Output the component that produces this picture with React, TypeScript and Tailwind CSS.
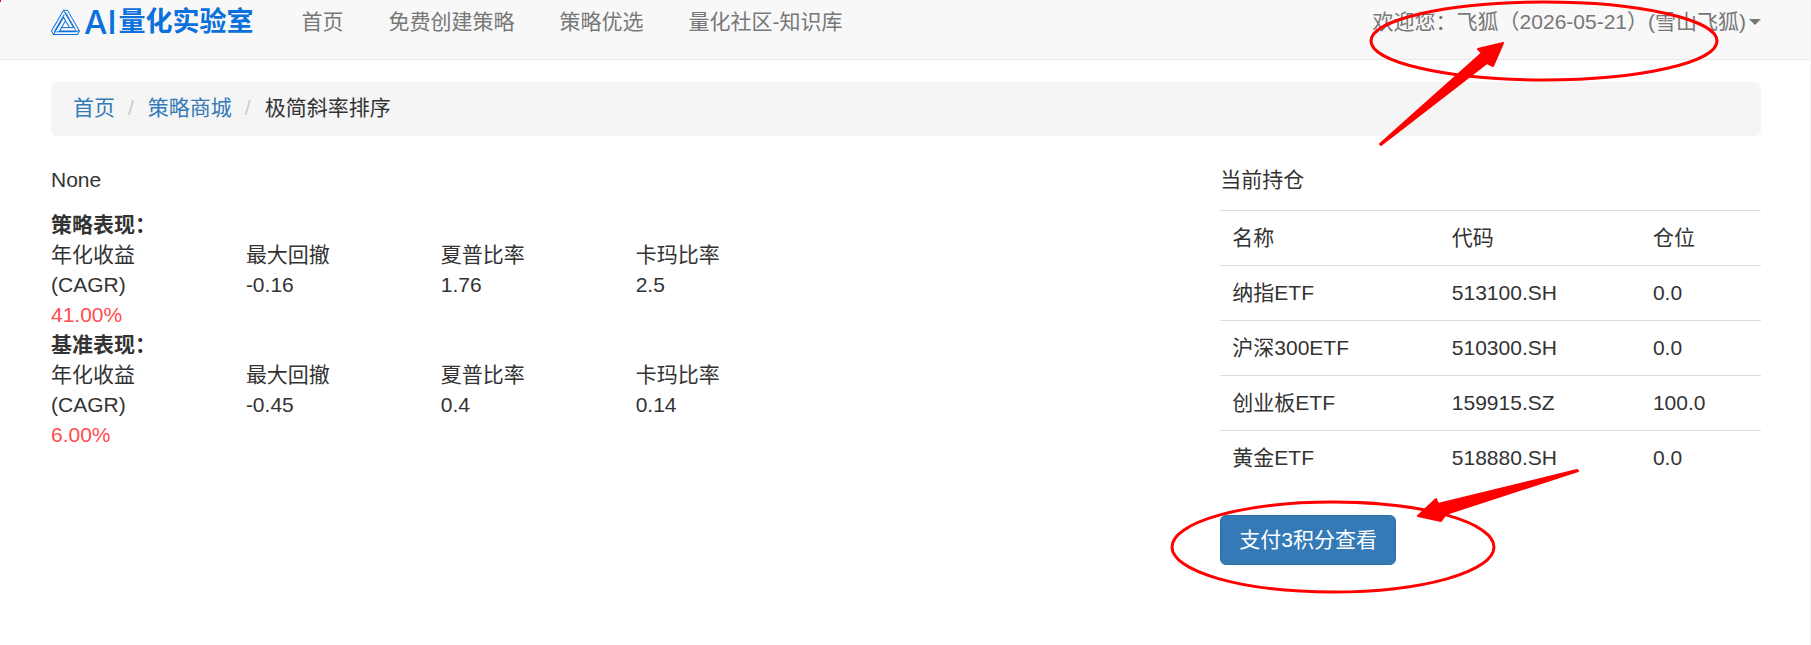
import { Fragment } from 'react'

interface Metric {
  label: string
  value: string
  highlight?: boolean
}

interface Holding {
  name: string
  code: string
  position: string
}

const NAV_ITEMS = ['首页', '免费创建策略', '策略优选', '量化社区-知识库']

const STRATEGY: Metric[] = [
  { label: '年化收益 (CAGR)', value: '41.00%', highlight: true },
  { label: '最大回撤', value: '-0.16' },
  { label: '夏普比率', value: '1.76' },
  { label: '卡玛比率', value: '2.5' }
]

const BENCHMARK: Metric[] = [
  { label: '年化收益 (CAGR)', value: '6.00%', highlight: true },
  { label: '最大回撤', value: '-0.45' },
  { label: '夏普比率', value: '0.4' },
  { label: '卡玛比率', value: '0.14' }
]

const HOLDINGS: Holding[] = [
  { name: '纳指ETF', code: '513100.SH', position: '0.0' },
  { name: '沪深300ETF', code: '510300.SH', position: '0.0' },
  { name: '创业板ETF', code: '159915.SZ', position: '100.0' },
  { name: '黄金ETF', code: '518880.SH', position: '0.0' }
]

function Logo() {
  // One arm of the triangle, drawn three times around its centre
  const arm = 'M12.5 1.3h4l12 20.8M12.5 1.3l10 17.3h-12M14.5 3.4l10 17.3'
  return (
    <a href="#" className="flex items-center text-[#0a70dc]" aria-label="AI量化实验室">
      <svg width="29" height="27" viewBox="0 0 29 27" fill="none" stroke="currentColor" strokeLinejoin="round">
        <path d={arm} />
        <path d={arm} transform="rotate(120 14.5 16.3)" />
        <path d={arm} transform="rotate(240 14.5 16.3)" />
      </svg>
      <span className="ml-1 font-['Inter',sans-serif] text-[33px] leading-[30px] font-medium">AI</span>
      <span className="ml-[2px] text-[27px] leading-[30px] font-bold">量化实验室</span>
    </a>
  )
}

function Navbar() {
  return (
    <nav className="flex items-start justify-between border-b border-[#e7e7e7] bg-[#f8f8f8] pt-[7px] pr-[49px] pb-[22px] pl-[51px] text-[#777]">
      <div className="flex items-center">
        <Logo />
        <ul className="ml-12 flex gap-[45px]">
          {NAV_ITEMS.map((item) => (
            <li key={item}>
              <a href="#">{item}</a>
            </li>
          ))}
        </ul>
      </div>
      <button type="button" className="flex items-center gap-[3px]">
        欢迎您：飞狐（2026-05-21）(雪山飞狐)
        <span className="border-x-6 border-t-6 border-x-transparent border-t-[#777]" />
      </button>
    </nav>
  )
}

function Breadcrumb() {
  const links = ['首页', '策略商城']
  return (
    <ol className="mb-[29px] flex rounded-md bg-[#f5f5f5] px-[22px] pt-[11px] pb-[13px]">
      {links.map((link) => (
        <Fragment key={link}>
          <li>
            <a href="#" className="text-[#337ab7]">{link}</a>
          </li>
          <li aria-hidden="true" className="mr-[14px] ml-[13px] text-[#ccc]">/</li>
        </Fragment>
      ))}
      <li>极简斜率排序</li>
    </ol>
  )
}

function MetricGroup({ title, metrics }: { title: string; metrics: Metric[] }) {
  return (
    <section>
      <h2 className="font-bold">{title}</h2>
      <div className="-mx-[22px] grid grid-cols-6">
        {metrics.map((m) => (
          <div key={m.label} className="px-[22px]">
            <div>{m.label}</div>
            <div className={m.highlight ? 'text-[#ff4d4f]' : ''}>{m.value}</div>
          </div>
        ))}
      </div>
    </section>
  )
}

function HoldingsTable() {
  return (
    <table className="mb-[30px] w-full border-separate border-spacing-0 text-left">
      <caption className="pb-[15px] text-left">当前持仓</caption>
      <thead>
        <tr>
          <th className="w-[40.6%] border-t border-[#ddd] p-3 font-normal">名称</th>
          <th className="w-[37.2%] border-t border-[#ddd] p-3 font-normal">代码</th>
          <th className="border-t border-[#ddd] p-3 font-normal">仓位</th>
        </tr>
      </thead>
      <tbody>
        {HOLDINGS.map((h) => (
          <tr key={h.code}>
            <td className="border-t border-[#ddd] p-3">{h.name}</td>
            <td className="border-t border-[#ddd] p-3">{h.code}</td>
            <td className="border-t border-[#ddd] p-3">{h.position}</td>
          </tr>
        ))}
      </tbody>
    </table>
  )
}

// Hand-drawn marks: red circles with an arrow pointing at each
function AccountMark() {
  return (
    <svg className="pointer-events-none absolute top-0 right-[90px]" width="351" height="150" viewBox="0 0 351 150" aria-hidden="true">
      <ellipse cx="175" cy="41" rx="173" ry="39" fill="none" stroke="red" strokeWidth="3" />
      <path
        d="M134 43 109 49 113 53 11 144 12 145 118 63 124 66z"
        fill="red"
        stroke="red"
        strokeWidth="2"
        strokeLinejoin="round"
      />
    </svg>
  )
}

function PayMark() {
  return (
    <svg className="pointer-events-none absolute -top-[47px] -left-[50px] max-w-none" width="412" height="128" viewBox="0 0 412 128" aria-hidden="true">
      <ellipse cx="163" cy="79" rx="161" ry="45" fill="none" stroke="red" strokeWidth="3" />
      <path
        d="M248 48 266 31 268 36 407 2 408 3 276 46 271 53z"
        fill="red"
        stroke="red"
        strokeWidth="2"
        strokeLinejoin="round"
      />
    </svg>
  )
}

export default function App() {
  return (
    <div className="relative min-h-screen overflow-hidden border-r border-[#f5f5f5] bg-white font-['Liberation_Sans','Noto_Sans_CJK_SC',sans-serif] text-[21px] leading-[30px] text-[#333]">
      <Navbar />
      <main className="pt-[22px] pr-[49px] pl-[51px]">
        <Breadcrumb />
        <div className="-mx-[22px] flex">
          <div className="w-2/3 px-[22px]">
            <p className="mb-[15px]">None</p>
            <MetricGroup title="策略表现：" metrics={STRATEGY} />
            <MetricGroup title="基准表现：" metrics={BENCHMARK} />
          </div>
          <div className="w-1/3 px-[22px]">
            <HoldingsTable />
            <div className="relative inline-block">
              <button type="button" className="rounded-md border border-[#2e6da4] bg-[#337ab7] px-[18px] py-[9px] text-white">
                支付3积分查看
              </button>
              <PayMark />
            </div>
          </div>
        </div>
      </main>
      <AccountMark />
      <span className="absolute top-0 left-0 h-[2px] w-px bg-[#ff0000]" />
    </div>
  )
}
